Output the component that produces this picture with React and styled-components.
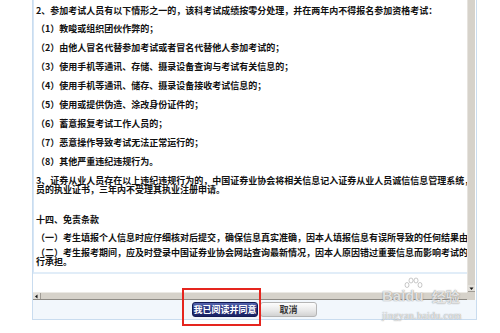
import React from "react";
import styled, { createGlobalStyle } from "styled-components";

const GlobalStyle = createGlobalStyle`
  html, body { margin: 0; padding: 0; background: #fff; }
  body { font-family: "Noto Sans CJK SC", "Noto Sans", sans-serif; }
`;

const Page = styled.div`
  position: relative;
  width: 500px;
  height: 333px;
  overflow: hidden;
  background: #fff;
`;

const Frame = styled.div`
  margin-left: 32px;
  width: 443px;
  height: 319px;
  border: 1px solid #c9dcef;
  border-top: none;
  display: flex;
  flex-direction: column;
`;

const ScrollArea = styled.div`
  display: grid;
  grid-template-columns: 434px 8px;
  grid-template-rows: 292px 8px;
`;

const Viewport = styled.div`
  overflow: hidden;
  background: #fff;
`;

const ContentBox = styled.div`
  width: 600px;
  padding: 5.5px 2px 6.5px 2px;
  border-left: 1px solid #d6e6f6;
  border-bottom: 2px solid #e1edf8;
  color: #111;
  font-size: 9px;
  font-weight: 700;
  white-space: nowrap;
`;

const Para = styled.p`
  margin: 0 0 ${(p) => p.$gap}px 0;
  line-height: 9px;
`;

const VScroll = styled.div`
  display: flex;
  flex-direction: column;
  justify-content: flex-end;
  background: #d6d2ca;
  border-left: 1px solid #e6e3de;
  box-sizing: border-box;
`;

const HScroll = styled.div`
  display: flex;
  align-items: stretch;
  background: #d6d2ca;
  border-top: 1px solid #ebe9e4;
  border-bottom: 1px solid #8e8b85;
  box-sizing: border-box;
`;

const ArrowBox = styled.div`
  display: flex;
  align-items: center;
  justify-content: center;
  width: ${(p) => p.$w}px;
  height: ${(p) => p.$h}px;
  background: #e2dfd9;
  border-right: ${(p) => (p.$side ? "1px solid #a09c95" : "none")};
  border-bottom: ${(p) => (p.$side ? "none" : "1px solid #a09c95")};
  box-sizing: border-box;
`;

const Corner = styled.div`
  background: #d6d2ca;
`;

const ButtonBar = styled.div`
  flex: 1;
  display: flex;
  align-items: center;
  justify-content: center;
  gap: 2px;
  background: #f2f7fc;
`;

const Mark = styled.span`
  position: relative;
  display: flex;
`;

const RedBox = styled.span`
  position: absolute;
  left: -10px;
  top: -14px;
  right: -3px;
  bottom: -9px;
  border: 2px solid #e5251e;
  pointer-events: none;
`;

const Button = styled.button`
  width: ${(p) => (p.$primary ? 66 : 57)}px;
  height: 15px;
  padding: 0;
  border-radius: 3px;
  font-family: "Noto Sans CJK SC", sans-serif;
  font-size: 9px;
  font-weight: 700;
  line-height: 13px;
  color: ${(p) => (p.$primary ? "#ffffff" : "#3a3a3a")};
  border: 1px solid ${(p) => (p.$primary ? "#121a52" : "#b5b5b5")};
  background: ${(p) =>
    p.$primary
      ? "linear-gradient(#5565b0, #26327c 45%, #1b2466)"
      : "linear-gradient(#fdfdfd, #e9e9e9 55%, #d2d2d2)"};
`;

const Watermark = styled.div`
  position: absolute;
  left: 382px;
  top: 277px;
  display: flex;
  flex-direction: column;
  align-items: flex-start;
  color: rgba(255, 255, 255, 0.75);
  text-shadow: 0 0 1px rgba(110, 110, 110, 0.55), 0 0 1px rgba(110, 110, 110, 0.55);
  pointer-events: none;
`;

const WmLogo = styled.div`
  display: flex;
  align-items: flex-end;
  font-family: "Liberation Sans", sans-serif;
  font-weight: 700;
  font-size: 15px;
  line-height: 14px;
  height: 26px;
`;

const WmCn = styled.span`
  font-family: "Noto Sans CJK SC", sans-serif;
  font-size: 14px;
  margin-left: 8px;
`;

const WmUrl = styled.div`
  margin-top: 8px;
  font-family: "Liberation Serif", serif;
  font-size: 10px;
  line-height: 10px;
  letter-spacing: 0.3px;
`;

const Paw = () => (
  <svg width="20" height="14" viewBox="0 0 20 14" style={{ marginLeft: -2, marginRight: -18, marginBottom: 12 }}>
    <g fill="rgba(255,255,255,0.7)" stroke="rgba(120,120,120,0.5)" strokeWidth="0.8">
      <ellipse cx="4" cy="8" rx="2" ry="2.5" />
      <ellipse cx="8" cy="3.5" rx="2" ry="2.5" />
      <ellipse cx="13" cy="3.5" rx="2" ry="2.5" />
      <ellipse cx="17" cy="8" rx="2" ry="2.5" />
    </g>
  </svg>
);

const Tri = ({ dir }) => (
  <svg width="5" height="5" viewBox="0 0 5 5">
    {dir === "down" ? (
      <path d="M0.5 1.5 L4.5 1.5 L2.5 4 Z" fill="#111" />
    ) : (
      <path d="M3.5 0.5 L3.5 4.5 L1 2.5 Z" fill="#111" />
    )}
  </svg>
);

export default function App() {
  return (
    <Page>
      <GlobalStyle />
      <Frame>
        <ScrollArea>
          <Viewport>
            <ContentBox>
              <Para $gap={9.9}>2、参加考试人员有以下情形之一的，该科考试成绩按零分处理，并在两年内不得报名参加资格考试：</Para>
              <Para $gap={9.9}>（1）教唆或组织团伙作弊的；</Para>
              <Para $gap={9.9}>（2）由他人冒名代替参加考试或者冒名代替他人参加考试的；</Para>
              <Para $gap={9.9}>（3）使用手机等通讯、存储、摄录设备查询与考试有关信息的；</Para>
              <Para $gap={9.9}>（4）使用手机等通讯、储存、摄录设备接收考试信息的；</Para>
              <Para $gap={9.9}>（5）使用或提供伪造、涂改身份证件的；</Para>
              <Para $gap={9.9}>（6）蓄意报复考试工作人员的；</Para>
              <Para $gap={9.9}>（7）恶意操作导致考试无法正常运行的；</Para>
              <Para $gap={9.9}>（8）其他严重违纪违规行为。</Para>
              <Para $gap={21}>
                3、证券从业人员存在以上违纪违规行为的，中国证券业协会将相关信息记入证券从业人员诚信信息管理系统，并注销其从业人
                <br />
                员的执业证书，三年内不受理其执业注册申请。
              </Para>
              <Para $gap={9}>十四、免责条款</Para>
              <Para $gap={6}>（一）考生填报个人信息时应仔细核对后提交，确保信息真实准确，因本人填报信息有误所导致的任何结果由考生本人承担。</Para>
              <Para $gap={0}>
                （二）考生报考期间，应及时登录中国证券业协会网站查询最新情况，因本人原因错过重要信息而影响考试的，由考生自
                <br />
                行承担。
              </Para>
            </ContentBox>
          </Viewport>
          <VScroll>
            <ArrowBox $w={7} $h={7}>
              <Tri dir="down" />
            </ArrowBox>
          </VScroll>
          <HScroll>
            <ArrowBox $w={8} $h={6} $side>
              <Tri dir="left" />
            </ArrowBox>
          </HScroll>
          <Corner />
        </ScrollArea>
        <ButtonBar>
          <Mark>
            <Button $primary>我已阅读并同意</Button>
            <RedBox />
          </Mark>
          <Button>取消</Button>
        </ButtonBar>
      </Frame>
      <Watermark>
        <WmLogo>
          Bai<Paw />du<WmCn>经验</WmCn>
        </WmLogo>
        <WmUrl>jingyan.baidu.com</WmUrl>
      </Watermark>
    </Page>
  );
}
